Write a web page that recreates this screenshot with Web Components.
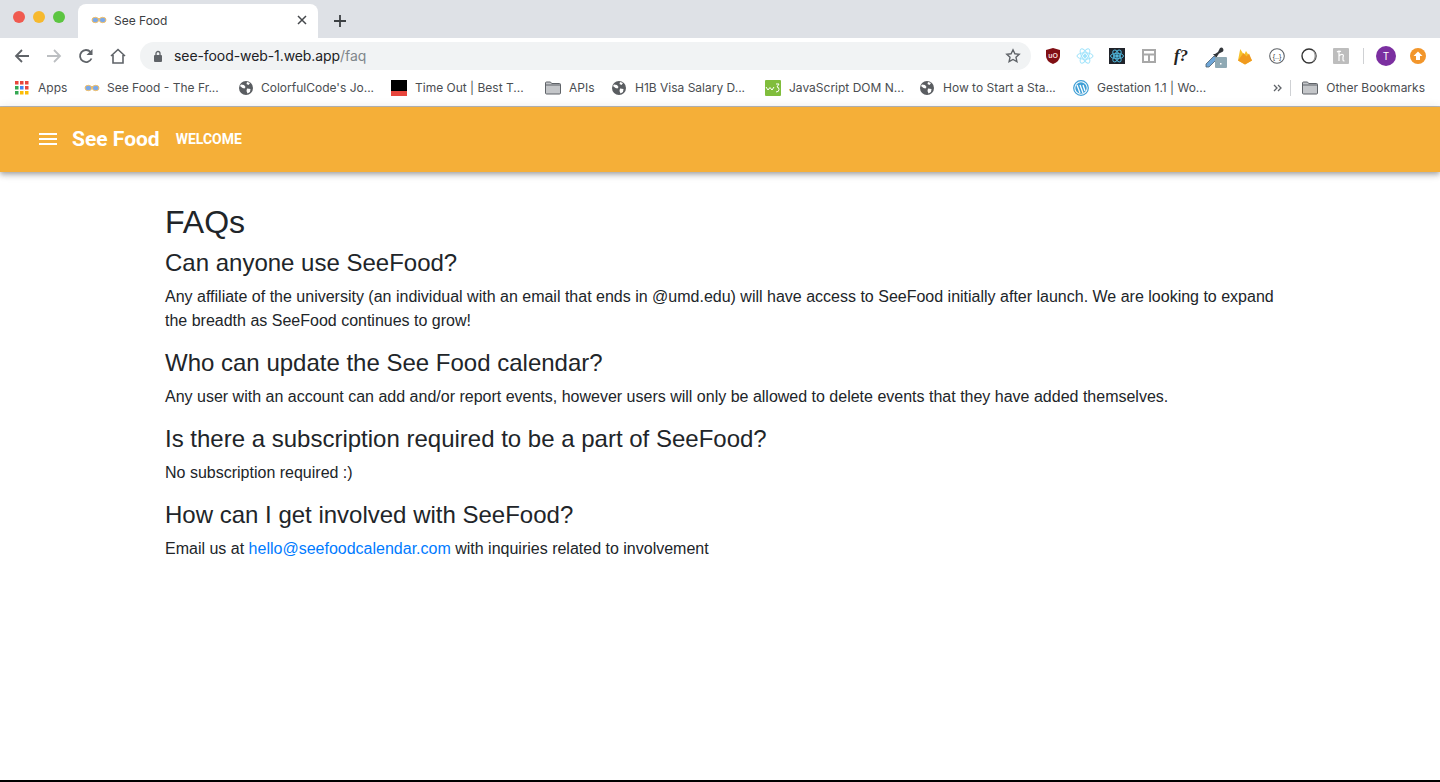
<!DOCTYPE html>
<html lang="en"><head><meta charset="utf-8"><title>See Food</title>
<style>
html,body{margin:0;height:100%;background:#fff;overflow:hidden}
body{display:flex;flex-direction:column;height:782px;font-family:"Liberation Sans",Arial,sans-serif}
faq-page{flex:1}
</style></head><body>
<tab-strip></tab-strip>
<nav-toolbar></nav-toolbar>
<bookmarks-bar></bookmarks-bar>
<app-nav></app-nav>
<faq-page>
  <faq-item q="Can anyone use SeeFood?">Any affiliate of the university (an individual with an email that ends in @umd.edu) will have access to SeeFood initially after launch. We are looking to expand the breadth as SeeFood continues to grow!</faq-item>
  <faq-item q="Who can update the See Food calendar?">Any user with an account can add and/or report events, however users will only be allowed to delete events that they have added themselves.</faq-item>
  <faq-item q="Is there a subscription required to be a part of SeeFood?">No subscription required :)</faq-item>
  <faq-item q="How can I get involved with SeeFood?">Email us at <a href="#" style="color:#007bff;text-decoration:none">hello@seefoodcalendar.com</a> with inquiries related to involvement</faq-item>
</faq-page>
<script>
const ui='"Liberation Sans",Arial,sans-serif', sys='Inter,"Liberation Sans",sans-serif', rob='Roboto,"Liberation Sans",sans-serif';
const glasses=`<svg width="16" height="16" viewBox="0 0 16 16"><path d="M1 7h14" stroke="#f3c069" stroke-width="2"/><ellipse cx="4.300" cy="8" rx="3.300" ry="2.700" fill="#7aa9ea" stroke="#f3c069"/><ellipse cx="11.700" cy="8" rx="3.300" ry="2.700" fill="#7aa9ea" stroke="#f3c069"/></svg>`;
const globe=`<svg width="16" height="16" viewBox="0 0 16 16"><circle cx="8" cy="8" r="7" fill="#5a5d61"/><path d="M3 4.500l3 .5 1.500 2-1 1.500-2-.5-2.500-2zM9 2l3 1-1.500 2L8.500 4zM9 8.500l3.500.5-.5 3-2.500 1.500-1-2.500z" fill="#fff"/></svg>`;
const folder=`<svg width="16" height="16" viewBox="0 0 16 16"><path d="M.5 3q0-1 1-1h4l1.200 1.500h7.800q1 0 1 1v8.500q0 1-1 1h-13q-1 0-1-1z" fill="#c4c6c9" stroke="#5f6368"/><path d="M.5 5h15" stroke="#5f6368"/></svg>`;

class TabStrip extends HTMLElement{constructor(){super();this.attachShadow({mode:'open'}).innerHTML=`<style>
:host{display:flex;height:38px;background:#dee1e6;box-sizing:border-box;padding:4px 0 0 0;align-items:flex-end;flex:none;font:12px ${sys};color:#3c4043}
.lights{display:flex;gap:8px;align-self:flex-start;padding:7px 0 0 13px;width:78px;box-sizing:border-box}
.lights i{width:12px;height:12px;border-radius:50%;display:block}
.tab{width:240px;height:34px;background:#fff;border-radius:8px 8px 0 0;display:flex;align-items:center;padding:0 11px 2px 13px;box-sizing:border-box;gap:7px}
.tab span{flex:1}
.plus{width:44px;height:34px;display:flex;align-items:center;justify-content:center}
svg{display:block}
</style>
<div class="lights"><i style="background:#f05a50"></i><i style="background:#f6b92e"></i><i style="background:#5cc541"></i></div>
<div class="tab">${glasses}<span>See Food</span><svg width="10" height="10" viewBox="0 0 10 10"><path d="M1 1l8 8M9 1l-8 8" stroke="#45484c" stroke-width="1.500"/></svg></div>
<div class="plus"><svg width="14" height="14" viewBox="0 0 14 14"><path d="M7 1v12M1 7h12" stroke="#3c4043" stroke-width="1.800"/></svg></div>`}}
customElements.define('tab-strip',TabStrip);

const ext=[
`<svg width="16" height="18" viewBox="0 0 16 18"><path d="M8 1l7 2v6q0 5-7 8-7-3-7-8V3z" fill="#800f14"/><text x="8" y="11" font-size="7" font-weight="700" text-anchor="middle" fill="#f3d8d8" font-family="Liberation Sans">uO</text></svg>`,
`<svg width="18" height="16" viewBox="0 0 18 16" fill="none" stroke="#9fe3fb" stroke-width="1"><ellipse cx="9" cy="8" rx="8" ry="3.200"/><ellipse cx="9" cy="8" rx="8" ry="3.200" transform="rotate(60 9 8)"/><ellipse cx="9" cy="8" rx="8" ry="3.200" transform="rotate(120 9 8)"/><circle cx="9" cy="8" r="1.500" fill="#9fe3fb"/></svg>`,
`<svg width="16" height="16" viewBox="0 0 16 16" fill="none" stroke="#4fb7dc"><rect width="16" height="16" fill="#20232a" stroke="none"/><ellipse cx="8" cy="8" rx="6.500" ry="2.700"/><ellipse cx="8" cy="8" rx="6.500" ry="2.700" transform="rotate(60 8 8)"/><ellipse cx="8" cy="8" rx="6.500" ry="2.700" transform="rotate(120 8 8)"/><circle cx="8" cy="8" r="1.300" fill="#4fb7dc"/></svg>`,
`<svg width="14" height="14" viewBox="0 0 14 14" fill="none" stroke="#a8a8a8" stroke-width="2"><rect x="1" y="1" width="12" height="12"/><path d="M1 5.500h12M7 5.500V13"/></svg>`,
`<span style="font:italic 700 17px 'Liberation Serif',serif;color:#222;width:20px;text-align:center;line-height:18px">f?</span>`,
`<svg width="22" height="21" viewBox="0 0 22 21" style="margin:3px 0 0 5px;flex:none"><path d="M1 20v-3l8-8 3 3-8 8z" fill="#6ea6d8" stroke="#4a5d6b" stroke-width=".8"/><path d="M8 7l2 0 3-2 2-4q2-1 3 .5t0 3l-4 2-2 3v2z" fill="#33373b"/><rect x="10" y="10" width="12" height="11" rx="1" fill="#8fa9b4"/><rect x="15" y="16" width="1.500" height="1.500" fill="#fff"/></svg>`,
`<svg width="14" height="17" viewBox="0 0 14 17"><path d="M0 12.500L2.200 1 6 7l2-4 6 9.500-7 4z" fill="#f6c22d"/><path d="M0 12.500l7 4 7-4-3-7-2.500 3L5.500 5z" fill="#f09a1f"/></svg>`,
`<svg width="16" height="16" viewBox="0 0 16 16" fill="none"><circle cx="8" cy="8" r="7.300" stroke="#5f6368" stroke-width="1.100"/><text x="8" y="10.500" font-size="7" text-anchor="middle" fill="#3c4043" stroke="none" font-family="Liberation Sans">{..}</text></svg>`,
`<svg width="16" height="16" viewBox="0 0 16 16" fill="none"><circle cx="8" cy="8" r="7" stroke="#333" stroke-width="1.400"/><path d="M11 1.700a7 7 0 0 1 0 12.600a9 9 0 0 0 0-12.600z" fill="#999"/></svg>`,
`<svg width="16" height="16" viewBox="0 0 16 16" fill="none"><rect width="16" height="16" rx="1" fill="#bdbdbd"/><path d="M4 4q2-1.500 4-.5M6 2.500V13M6 8q2-2 3.500-1.500T10 9v3q0 1 1.500 1" stroke="#fff" stroke-width="1.200"/></svg>`];
class NavToolbar extends HTMLElement{constructor(){super();this.attachShadow({mode:'open'}).innerHTML=`<style>
:host{display:flex;height:32px;background:#fff;align-items:center;flex:none;padding:4px 0 0 14px;box-sizing:border-box;font:14px ${sys};color:#202124}
svg{display:block;flex:none}
.nav{display:flex;gap:16px;width:126px;align-items:center;flex:none}
.omni{width:891px;height:28px;background:#f1f3f4;border-radius:14px;display:flex;align-items:center;padding:0 10px 0 13px;box-sizing:border-box;gap:11px;flex:none}
.url{flex:1;white-space:nowrap;letter-spacing:-.08px;padding-bottom:2px}.url b{font-weight:400;color:#80868b}
.exts{display:flex;align-items:center;flex:none;margin-left:6px}
.exts>*{flex:none}
.slot{width:32px;height:20px;display:flex;align-items:center;justify-content:center}
.sep{width:1px;height:16px;background:#cfd1d4;margin:0 6px 0 6px}
.av{width:20px;height:20px;border-radius:50%;color:#fff;display:flex;align-items:center;justify-content:center;font-size:10px}
</style>
<div class="nav">
<svg width="16" height="16" viewBox="0 0 16 16" fill="none" stroke="#5f6368" stroke-width="1.800"><path d="M15 8H2M8 2L2 8l6 6"/></svg>
<svg width="16" height="16" viewBox="0 0 16 16" fill="none" stroke="#bcbfc2" stroke-width="1.800"><path d="M1 8h13M8 2l6 6-6 6"/></svg>
<svg width="16" height="16" viewBox="0 0 16 16" fill="none" stroke="#5f6368" stroke-width="1.800"><path d="M13.500 10.500A6 6 0 1 1 12.500 4"/><path d="M14.500 1v6h-6z" fill="#5f6368" stroke="none"/></svg>
<svg width="16" height="16" viewBox="0 0 16 16" fill="none" stroke="#5f6368" stroke-width="1.600"><path d="M1 8l7-6.500L15 8M3 7v8h10V7"/></svg>
</div>
<div class="omni"><svg width="10" height="12" viewBox="0 0 10 12"><rect x="1" y="5" width="8" height="7" rx="1" fill="#5f6368"/><path d="M3 5V3.500a2 2 0 0 1 4 0V5" fill="none" stroke="#5f6368" stroke-width="1.300"/></svg>
<span class="url">see-food-web-1.web.app<b>/faq</b></span>
<svg width="16" height="16" viewBox="0 0 16 16" fill="none" stroke="#5f6368" stroke-width="1.400"><path d="M8 1.800l1.900 4 4.300.5-3.200 3 .9 4.300L8 11.500l-3.900 2.100.9-4.300-3.200-3 4.300-.5z"/></svg></div>
<div class="exts">${ext.map(e=>`<span class="slot">${e}</span>`).join('')}<span class="sep"></span><span class="slot"><span class="av" style="background:#7b2fa0">T</span></span><span class="slot"><svg width="16" height="16" viewBox="0 0 16 16"><circle cx="8" cy="8" r="8" fill="#f2962b"/><path d="M8 3.500L12.500 8H10v4H6V8H3.500z" fill="#fff"/></svg></span></div>`}}
customElements.define('nav-toolbar',NavToolbar);

const marks=[
[`<svg width="14" height="14" viewBox="0 0 14 14">${[['#e8453c','#e8453c','#e8453c'],['#34a853','#4285f4','#e8453c'],['#34a853','#fbbc05','#fbbc05']].map((r,y)=>r.map((c,x)=>`<rect x="${x*5}" y="${y*5}" width="3.500" height="3.500" fill="${c}"/>`).join('')).join('')}</svg>`,'Apps',23,69],
[glasses,'See Food - The Fr...',23,154],
[globe,"ColorfulCode's Jo...",23,153],
[`<svg width="16" height="16" viewBox="0 0 16 16"><rect width="16" height="11" fill="#000"/><rect y="11" width="16" height="5" fill="#e8453c"/></svg>`,'Time Out | Best T...',24,154],
[folder,'APIs',24,66],
[globe,'H1B Visa Salary D...',24,154],
[`<svg width="16" height="16" viewBox="0 0 16 16"><rect width="16" height="16" rx="1" fill="#80bd3c"/><path d="M1 7l2 3 2-2.500L7 10l2-3M11 4h3l-2 3q2 0 2 2.500T11 12" fill="none" stroke="#fff"/></svg>`,'JavaScript DOM N...',24,154],
[globe,'How to Start a Sta...',24,154],
[`<svg width="16" height="16" viewBox="0 0 16 16"><circle cx="8" cy="8" r="7.300" fill="#fff" stroke="#3f9fd6" stroke-width="1.200"/><circle cx="8" cy="8" r="5.700" fill="#3f9fd6"/><path d="M4 5l3 8M7 5l3 8M10 5l2 6" stroke="#fff" stroke-width="1.300" fill="none"/></svg>`,'Gestation 1.1 | Wo...',24,0]];
class BookmarksBar extends HTMLElement{constructor(){super();this.attachShadow({mode:'open'}).innerHTML=`<style>
:host{display:flex;height:37px;background:#fff;align-items:center;flex:none;box-sizing:border-box;padding:0 15px 1px 15px;font:12px ${sys};color:#4a4d51;border-bottom:1px solid #b9b9b9}
.m{display:flex;align-items:center;flex:none;white-space:nowrap}
.i{display:flex;align-items:center;flex:none}
svg{display:block}
.more{margin-left:auto;display:flex;align-items:center;gap:8px;color:#5f6368}
.sep{width:1px;height:16px;background:#cfd1d4}
</style>${marks.map(([i,t,o,w])=>`<div class="m" style="${w?`width:${w}px`:''}"><span class="i" style="width:${o}px">${i}</span><span>${t}</span></div>`).join('')}
<div class="more"><svg width="9" height="8" viewBox="0 0 9 8" fill="none" stroke="#5f6368" stroke-width="1.300"><path d="M1 1l3 3-3 3M5 1l3 3-3 3"/></svg><span class="sep"></span><span class="m" style="margin-left:3px"><span class="i" style="width:24px">${folder}</span><span style="color:#4a4d51">Other Bookmarks</span></span></div>`}}
customElements.define('bookmarks-bar',BookmarksBar);

class AppNav extends HTMLElement{constructor(){super();this.attachShadow({mode:'open'}).innerHTML=`<style>
:host{display:flex;height:65px;background:#f5af38;align-items:center;flex:none;padding:0 0 2px 39px;box-sizing:border-box;color:#fff;font-family:${rob};box-shadow:0 2px 4px -1px rgba(0,0,0,.2),0 4px 5px rgba(0,0,0,.14),0 1px 10px rgba(0,0,0,.12);position:relative;z-index:1}
svg{display:block;margin-right:15px}
.t{font-size:21px;font-weight:700;margin-right:16px}
.w{font-size:14px;font-weight:700}
</style><svg width="18" height="12" viewBox="0 0 18 12"><path d="M0 1h18M0 6h18M0 11h18" stroke="#fff" stroke-width="1.800"/></svg><span class="t">See Food</span><span class="w">WELCOME</span>`}}
customElements.define('app-nav',AppNav);

class FaqPage extends HTMLElement{constructor(){super();this.attachShadow({mode:'open'}).innerHTML=`<style>
:host{display:block;box-sizing:border-box;padding:31px 165px 0;color:#212529;font-family:${ui};border-bottom:2px solid #000}
h1{font-size:32px;font-weight:500;line-height:38px;margin:0 0 8px}
</style><h1>FAQs</h1><slot></slot>`}}
customElements.define('faq-page',FaqPage);

class FaqItem extends HTMLElement{constructor(){super();this.attachShadow({mode:'open'}).innerHTML=`<style>
:host{display:block;font-size:16px;line-height:24px;color:#212529}
h3{font-size:24px;font-weight:500;line-height:27px;margin:0 0 9px}
p{margin:0 0 16px}
</style><h3>${this.getAttribute('q')}</h3><p><slot></slot></p>`}}
customElements.define('faq-item',FaqItem);
</script>
</body></html>
